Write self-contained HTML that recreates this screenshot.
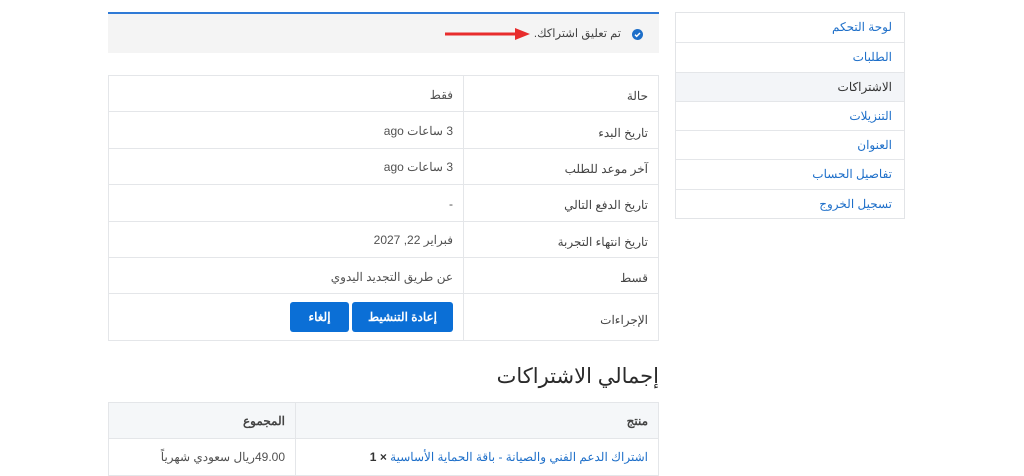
<!DOCTYPE html>
<html dir="rtl"><head><meta charset="utf-8"><style>
*{box-sizing:border-box;margin:0;padding:0}
body{width:1024px;height:469px;overflow:hidden;background:#fff;font-family:"Liberation Sans","Noto Sans CJK SC",sans-serif;font-size:12px;color:#515151;position:relative}
.abs{position:absolute}
.notice{left:108px;top:12px;width:551px;height:41px;background:#f4f4f4;border-top:2px solid #2f7ad6}
.nav{left:675px;top:12px;width:230px;border:1px solid #e2e4e7}
.nav div{height:29.3px;line-height:29px;padding-right:12px;border-top:1px solid #e4e6e9;color:#1e6fc9;font-size:12px}
.nav div:first-child{border-top:none}
.nav .act{background:#f3f5f8;color:#333}
table{border-collapse:collapse}
.t1{left:108px;top:75px;width:551px}
.t1 td{border:1px solid #e4e6e9;height:36.4px;padding:2px 10px 0;vertical-align:middle}
.t1 td.l{width:195px;color:#444;padding-top:5px}
.btn{display:inline-block;background:#0b6fd6;color:#fff;font-weight:bold;border-radius:3px;height:30px;line-height:30px;text-align:center;margin-left:3px;vertical-align:middle}
h2{position:absolute;right:365px;top:364px;font-size:21px;font-weight:normal;color:#2a2a2a}
.t2{left:108px;top:402px;width:551px}
.t2 td{border:1px solid #e4e6e9;height:37px;padding:0 10px;white-space:nowrap}
.t2 tr:first-child td{background:#f5f7f9;font-weight:bold;color:#444;height:36px}
</style></head><body>
<div class="abs notice">
 <svg class="abs" style="left:524px;top:15px" width="11" height="11" viewBox="0 0 12 12"><circle cx="6" cy="6" r="6" fill="#1e6fc9"/><path d="M3.3 6.2l1.8 1.8 3.6-3.6" stroke="#fff" stroke-width="1.6" fill="none"/></svg>
 <span class="abs" style="right:38px;top:12px;color:#444;font-size:11.5px">تم تعليق اشتراكك.</span>
 <svg class="abs" style="left:335px;top:13px" width="92" height="14" viewBox="0 0 92 14"><path d="M2 7H74" stroke="#e82c2c" stroke-width="3"/><path d="M72 1L87 7L72 13Z" fill="#e82c2c"/></svg>
</div>
<div class="abs nav">
<div>لوحة التحكم</div><div>الطلبات</div><div class="act">الاشتراكات</div><div>التنزيلات</div><div>العنوان</div><div>تفاصيل الحساب</div><div>تسجيل الخروج</div>
</div>
<table class="abs t1">
<tr><td class="l">حالة</td><td>فقط</td></tr>
<tr><td class="l">تاريخ البدء</td><td>3 ساعات ago</td></tr>
<tr><td class="l">آخر موعد للطلب</td><td>3 ساعات ago</td></tr>
<tr><td class="l">تاريخ الدفع التالي</td><td>-</td></tr>
<tr><td class="l">تاريخ انتهاء التجربة</td><td>فبراير 22, 2027</td></tr>
<tr><td class="l">قسط</td><td>عن طريق التجديد اليدوي</td></tr>
<tr><td class="l" style="height:47px">الإجراءات</td><td style="padding-top:0"><span class="btn" style="width:101px;margin-right:0">إعادة التنشيط</span><span class="btn" style="width:59px">إلغاء</span></td></tr>
</table>
<h2>إجمالي الاشتراكات</h2>
<table class="abs t2">
<tr><td style="width:363px">منتج</td><td style="padding-right:10px">المجموع</td></tr>
<tr><td><span style="color:#1e6fc9">اشتراك الدعم الفني والصيانة - باقة الحماية الأساسية</span> <b style="color:#333">× 1</b></td><td style="padding-right:10px">49.00ريال سعودي شهرياً</td></tr>
</table>
</body></html>
